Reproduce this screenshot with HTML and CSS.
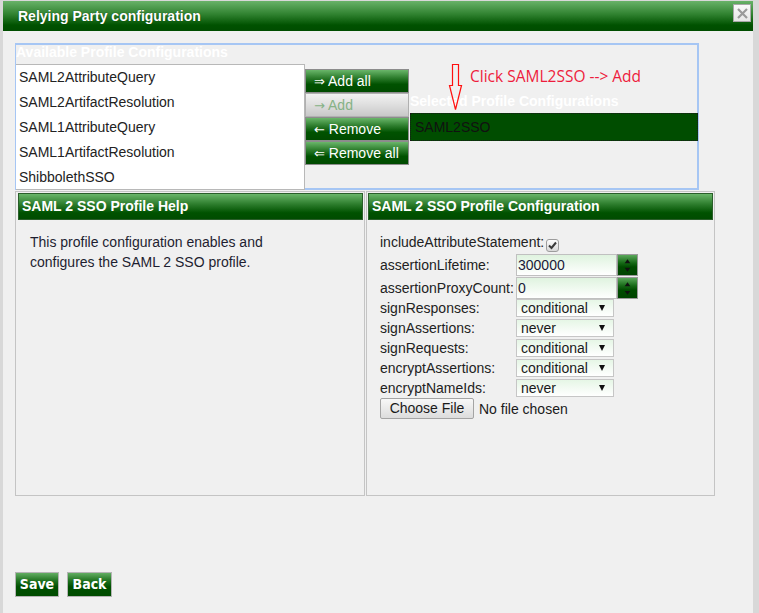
FILE: index.html
```html
<!DOCTYPE html>
<html>
<head>
<meta charset="utf-8">
<link rel="stylesheet" href="styles.css">
</head>
<body>
<div class="dialog">
  <div class="titlebar">
    <span class="title">Relying Party configuration</span>
    <span class="close"><svg width="15" height="15" viewBox="0 0 15 15"><path d="M3 3 L12 12 M12 3 L3 12" stroke="#9a9a9a" stroke-width="2.2" fill="none"/></svg></span>
  </div>
  <div class="content">
    <div class="picker">
      <div class="col-avail">
        <div class="legend">Available Profile Configurations</div>
        <ul class="list">
          <li>SAML2AttributeQuery</li>
          <li>SAML2ArtifactResolution</li>
          <li>SAML1AttributeQuery</li>
          <li>SAML1ArtifactResolution</li>
          <li>ShibbolethSSO</li>
        </ul>
      </div>
      <div class="btns">
        <div class="gbtn"><span class="ar">⇒</span> Add all</div>
        <div class="gbtn disabled"><span class="ar">→</span> Add</div>
        <div class="gbtn"><span class="ar">←</span> Remove</div>
        <div class="gbtn"><span class="ar">⇐</span> Remove all</div>
      </div>
      <div class="col-sel">
        <div class="legend sel-legend">Selected Profile Configurations</div>
        <div class="selbox">SAML2SSO</div>
      </div>
      <div class="note">Click SAML2SSO --&gt; Add</div>
      <svg class="arrow" width="17" height="47" viewBox="0 0 17 47"><polygon points="5.5,0.5 11.5,0.5 11.5,21.5 14.5,21.5 8.5,45.5 2.5,21.5 5.5,21.5" fill="none" stroke="#ff1010" stroke-width="1.2"/></svg>
    </div>
    <div class="panels">
      <div class="panel help">
        <div class="phead">SAML 2 SSO Profile Help</div>
        <p class="helptext">This profile configuration enables and configures the SAML 2 SSO profile.</p>
      </div>
      <div class="panel config">
        <div class="phead">SAML 2 SSO Profile Configuration</div>
        <div class="form">
          <div class="row r-check">includeAttributeStatement:<span class="check"><svg width="11" height="11" viewBox="0 0 11 11"><path d="M2 5.5 L4.5 8 L9 2.5" stroke="#3a3a3a" stroke-width="2" fill="none"/></svg></span></div>
          <div class="row r-num"><span class="lbl">assertionLifetime:</span><span class="num">300000</span><span class="spin"><svg width="20" height="21" viewBox="0 0 20 21"><polygon points="10,4 13,8 7,8" fill="#111"/><polygon points="10,17 13,13 7,13" fill="#111"/></svg></span></div>
          <div class="row r-num r-num2"><span class="lbl">assertionProxyCount:</span><span class="num">0</span><span class="spin"><svg width="20" height="21" viewBox="0 0 20 21"><polygon points="10,4 13,8 7,8" fill="#111"/><polygon points="10,17 13,13 7,13" fill="#111"/></svg></span></div>
          <div class="row r-sel first"><span class="lbl">signResponses:</span><span class="sel">conditional<i class="tri"></i></span></div>
          <div class="row r-sel"><span class="lbl">signAssertions:</span><span class="sel">never<i class="tri"></i></span></div>
          <div class="row r-sel"><span class="lbl">signRequests:</span><span class="sel">conditional<i class="tri"></i></span></div>
          <div class="row r-sel"><span class="lbl">encryptAssertions:</span><span class="sel">conditional<i class="tri"></i></span></div>
          <div class="row r-sel"><span class="lbl">encryptNameIds:</span><span class="sel">never<i class="tri"></i></span></div>
          <div class="row r-file"><span class="filebtn">Choose File</span><span class="nofile">No file chosen</span></div>
        </div>
      </div>
    </div>
    <div class="actions">
      <div class="abtn save">Save</div>
      <div class="abtn back">Back</div>
    </div>
  </div>
</div>
</body>
</html>
```

FILE: styles.css
```css
* { box-sizing: border-box; }
html, body { margin: 0; padding: 0; }
body {
  width: 759px;
  height: 613px;
  overflow: hidden;
  background: #d8d8d8;
  padding: 1px 0 0 3px;
  font-family: "Liberation Sans", Arial, sans-serif;
  font-size: 14px;
  color: #222;
}
.dialog {
  width: 750px;
  height: 612px;
  background: #f0f0f0;
  position: relative;
}
.titlebar {
  height: 30px;
  background: linear-gradient(to bottom, #68b268 0%, #2f812f 45%, #005200 80%, #004c00 100%);
  padding-left: 15px;
  position: relative;
}
.title {
  color: #fff;
  font-weight: bold;
  font-size: 14px;
  line-height: 30px;
  text-shadow: 0 0 1px #0a3a0a;
}
.close {
  position: absolute;
  left: 730px;
  top: 3px;
  width: 18px;
  height: 18px;
  border: 1px solid #a8a8a8;
  background: linear-gradient(#fafafa, #e6e6e6);
  display: flex;
  align-items: center;
  justify-content: center;
}
.content {
  padding: 12px 0 0 12px;
}
.picker {
  position: relative;
  width: 684px;
  height: 147px;
  border-style: solid;
  border-color: #a6c6f4;
  border-width: 2px 2px 2px 1px;
  display: flex;
  align-items: flex-start;
}
.legend {
  color: #fff;
  font-weight: bold;
  font-size: 14px;
  line-height: 15px;
  height: 19px;
  white-space: nowrap;
}
.col-avail { width: 289px; }
.list {
  list-style: none;
  margin: 0;
  padding: 0;
  height: 126px;
  background: #fff;
  border: 1px solid #b8b8b8;
  border-left: none;
}
.list li {
  line-height: 25px;
  height: 25px;
  padding-left: 3px;
  color: #222;
}
.btns {
  width: 104px;
  margin-top: 24px;
  display: flex;
  flex-direction: column;
}
.gbtn {
  height: 24px;
  border: 1px solid #8c8c8c;
  background: linear-gradient(to bottom, #6ab66a 0%, #2e7e2e 35%, #005200 65%, #004a00 100%);
  color: #fff;
  line-height: 22px;
  padding-left: 8px;
  white-space: nowrap;
}
.ar {
  font-family: "DejaVu Sans", sans-serif;
  font-size: 13px;
}
.gbtn.disabled {
  background: linear-gradient(to bottom, #f2f2f2 0%, #dedede 50%, #c8c8c8 100%);
  border-color: #b0b0b0;
  color: #86b286;
}
.col-sel {
  flex: 1;
  margin-top: 49px;
}
.sel-legend { padding-left: 1px; }
.selbox {
  margin-left: 1px;
  margin-right: -1px;
  height: 28px;
  background: #004d00;
  border: 1px dotted #1a1a1a;
  color: #111;
  line-height: 26px;
  padding-left: 4px;
}
.note {
  position: absolute;
  left: 454px;
  top: 21px;
  font-family: "Open Sans", sans-serif;
  font-size: 15.5px;
  line-height: 20px;
  color: #ee1c3c;
  white-space: nowrap;
}
.arrow {
  position: absolute;
  left: 431px;
  top: 19px;
}
.panels {
  margin-top: 1px;
  display: flex;
  gap: 1px;
}
.panel {
  height: 305px;
  border: 1px solid #c4c4c4;
  padding: 1px 1px 0 2px;
}
.panel.help { width: 350px; }
.panel.config { width: 349px; padding-left: 1px; }
.phead {
  height: 27px;
  border: 1px solid #2a5e2a;
  background: linear-gradient(to bottom, #6ab66a 0%, #2e7e2e 40%, #005200 75%, #004c00 100%);
  color: #fff;
  font-weight: bold;
  line-height: 25px;
  padding-left: 3px;
  white-space: nowrap;
}
.helptext {
  margin: 0;
  padding: 12px 0 0 12px;
  width: 282px;
  line-height: 20px;
  color: #1e1e30;
}
.form {
  padding: 12px 0 0 12px;
}
.row {
  display: flex;
  align-items: center;
  white-space: nowrap;
}
.lbl {
  width: 136px;
  flex: none;
  overflow: visible;
}
.r-check {
  height: 20px;
  line-height: 20px;
}
.check {
  margin-left: 2px;
  margin-top: 6px;
  width: 13px;
  height: 13px;
  border: 1px solid #9c9c9c;
  border-radius: 3px;
  background: linear-gradient(#fdfdfd, #d8d8d8);
  display: flex;
  align-items: center;
  justify-content: center;
}
.r-num {
  margin-top: 2px;
  height: 22px;
}
.r-num2 { margin-top: 1px; }
.num {
  width: 101px;
  height: 22px;
  border: 1px solid #c0c0c0;
  background: linear-gradient(to bottom, #dff3df, #ffffff);
  line-height: 20px;
  padding-left: 1px;
  color: #1a1a38;
}
.spin {
  width: 21px;
  height: 22px;
  border: 1px solid #9a9a9a;
  background: linear-gradient(to bottom, #5aa85a 0%, #166816 40%, #004c00 60%, #004400 100%);
  display: flex;
}
.r-sel {
  height: 18px;
  margin-top: 2px;
}
.r-sel.first { margin-top: 0; }
.sel {
  position: relative;
  width: 98px;
  height: 18px;
  border: 1px solid #c6c6c6;
  background: linear-gradient(to bottom, #e6f6e6, #ffffff);
  line-height: 16px;
  padding-left: 4px;
  color: #1a1a1a;
}
.tri {
  position: absolute;
  right: 8px;
  top: 5px;
  width: 0;
  height: 0;
  border-left: 3.5px solid transparent;
  border-right: 3.5px solid transparent;
  border-top: 6px solid #111;
}
.r-file {
  margin-top: 1px;
  height: 21px;
}
.filebtn {
  width: 94px;
  height: 21px;
  border: 1px solid #a4a4a4;
  border-radius: 2px;
  background: linear-gradient(#f8f8f8, #dcdcdc);
  text-align: center;
  line-height: 19px;
  color: #1a1a1a;
}
.nofile {
  margin-left: 5px;
  color: #1a1a1a;
}
.actions {
  margin-top: 76px;
  display: flex;
  gap: 8px;
}
.abtn {
  height: 25px;
  border: 1px solid #b4b4b4;
  background: linear-gradient(to bottom, #62ae62 0%, #1e701e 35%, #005000 60%, #004c00 100%);
  color: #fff;
  font-family: "DejaVu Sans Condensed", "DejaVu Sans", sans-serif;
  font-stretch: condensed;
  font-weight: bold;
  font-size: 14px;
  line-height: 22px;
  text-align: center;
}
.abtn.save { width: 44px; }
.abtn.back { width: 45px; }
```
